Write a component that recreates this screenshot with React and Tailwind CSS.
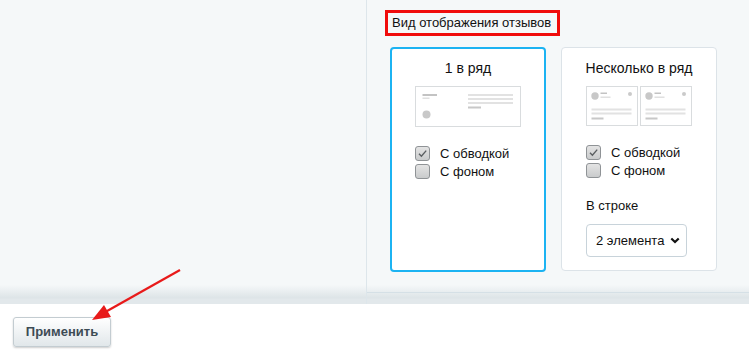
import React from "react";

function Check({ checked }) {
  return (
    <span className="relative inline-block w-[15px] h-[15px] rounded-[3px] border border-[#8f9396] bg-[linear-gradient(to_bottom,#e4e4e4,#c9cbcc)] shrink-0">
      {checked && (
        <svg className="absolute left-[1px] top-[1px]" width="11" height="11" viewBox="0 0 11 11">
          <path d="M2 5.8 L4.4 8.2 L9.2 2.6" fill="none" stroke="#5a5e61" strokeWidth="1.4" />
        </svg>
      )}
    </span>
  );
}

function Row({ checked, label }) {
  return (
    <div className="flex items-center h-[15px]">
      <Check checked={checked} />
      <span className="ml-[10px] text-[13px] leading-[15px] text-[#111]">{label}</span>
    </div>
  );
}

function PreviewOne() {
  return (
    <div className="w-[106px] h-[41px] border border-[#d9dcde] bg-white">
      <svg width="104" height="39" viewBox="1 1 104 39">
        <rect x="7.5" y="8" width="14.5" height="2" fill="#c3c3c3" />
        <rect x="7.5" y="11.5" width="7" height="1.5" fill="#e0e0e0" />
        <circle cx="11.5" cy="28.5" r="4" fill="#c8c8c8" />
        <rect x="53" y="8" width="45" height="2" fill="#e2e2e2" />
        <rect x="53" y="12" width="45" height="2" fill="#e2e2e2" />
        <rect x="53" y="16" width="45" height="2" fill="#e2e2e2" />
        <rect x="53" y="20.5" width="13" height="2" fill="#c8c8c8" />
      </svg>
    </div>
  );
}

function PreviewSmall() {
  return (
    <div className="w-[52px] h-[40px] border border-[#d9dcde] bg-white">
      <svg width="50" height="38" viewBox="1 1 50 38">
        <circle cx="9" cy="10" r="3.7" fill="#c8c8c8" />
        <rect x="14.5" y="6.5" width="6.5" height="1.5" fill="#c3c3c3" />
        <rect x="14.5" y="10.5" width="10" height="1.5" fill="#e0e0e0" />
        <circle cx="44" cy="8" r="2" fill="#cacaca" />
        <rect x="5.5" y="22.5" width="40" height="2" fill="#e2e2e2" />
        <rect x="5.5" y="26.5" width="40" height="2" fill="#e2e2e2" />
        <rect x="5.5" y="31.5" width="12" height="2" fill="#c8c8c8" />
      </svg>
    </div>
  );
}

export default function App() {
  return (
    <div className="relative w-[749px] h-[357px] overflow-hidden bg-white font-['Liberation_Sans',Arial,sans-serif]">
      <div className="flex h-[304px] bg-[linear-gradient(to_bottom,#f5f8f9_285px,#dde4e7_298px,#e2e8eb_299px,#e2e8eb_304px)]">
        <div className="w-[367px] border-r border-[#dde6eb]" />
        <div className="flex-1">
          <div className="h-[293px] border-b border-[#d5e0e6] pt-[10px]">
            <div className="ml-[18px] inline-flex h-[26px] w-[175px] items-center border-[3px] border-[#f00c0c] px-[4px] text-[13px] text-[#111]">
              Вид отображения отзывов
            </div>
            <div className="ml-[23px] mt-[11px] flex gap-[15px]">
              <div className="w-[156px] h-[225px] rounded-[4px] border-2 border-[#1cb3f2] bg-white pt-[11px] flex flex-col items-center">
                <div className="text-[14px] leading-[16px] text-[#111]">1 в ряд</div>
                <div className="mt-[10px]">
                  <PreviewOne />
                </div>
                <div className="mt-[19px] w-[106px] flex flex-col gap-[3px]">
                  <Row checked label="С обводкой" />
                  <Row label="С фоном" />
                </div>
              </div>
              <div className="w-[156px] h-[224px] rounded-[4px] border border-[#dce3e8] bg-white pt-[12px] flex flex-col items-center">
                <div className="text-[14px] leading-[16px] text-[#111]">Несколько в ряд</div>
                <div className="mt-[10px] flex gap-[2px]">
                  <PreviewSmall />
                  <PreviewSmall />
                </div>
                <div className="mt-[19px] w-[106px] flex flex-col gap-[3px]">
                  <Row checked label="С обводкой" />
                  <Row label="С фоном" />
                </div>
                <div className="mt-[20px] w-[106px] text-[13px] leading-[16px] text-[#111]">В строке</div>
                <div className="mt-[10px] w-[106px]">
                  <div className="w-[101px] h-[33px] rounded-[4px] border border-[#c8d3da] bg-white flex items-center pl-[9px] pr-[6px] justify-between">
                    <span className="text-[13px] text-[#111]">2 элемента</span>
                    <svg width="10" height="7" viewBox="0 0 10 7">
                      <path d="M1.3 1.5 L5 5 L8.7 1.5" fill="none" stroke="#111" strokeWidth="2.2" />
                    </svg>
                  </div>
                </div>
              </div>
            </div>
          </div>
        </div>
      </div>
      <div className="pl-[13px] pt-[13px]">
        <button className="w-[98px] h-[30px] rounded-[3px] border border-[#c3ccd1] bg-[linear-gradient(to_bottom,#ffffff,#e1e7ea)] shadow-[0_1px_2px_rgba(0,0,0,0.2)] text-[13px] font-bold text-[#3d4b54]">
          Применить
        </button>
      </div>
      <svg className="absolute left-0 top-0 pointer-events-none" width="749" height="357">
        <line x1="180" y1="270" x2="100" y2="315" stroke="#e81a1a" strokeWidth="2.2" />
        <polygon points="92,320 104,305 111,317" fill="#e81a1a" />
      </svg>
    </div>
  );
}
